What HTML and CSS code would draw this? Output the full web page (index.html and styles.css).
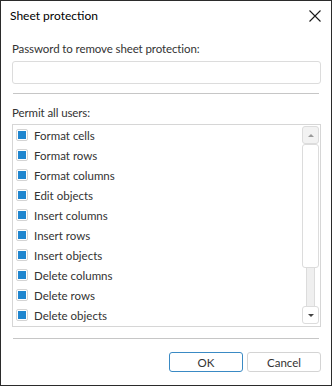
FILE: index.html
```html
<!DOCTYPE html>
<html lang="en">
<head>
    <meta charset="UTF-8">
    <meta name="viewport" content="width=device-width, initial-scale=1.0">
    <title>Sheet protection</title>
    <link rel="stylesheet" href="styles.css">
</head>
<body>
    <div class="dialog">
        <div class="title-bar">
            <span class="title">Sheet protection</span>
            <button class="close-button" aria-label="Close">
                <svg width="12" height="12" viewBox="0 0 12 12">
                    <path d="M0.5 0.5 L11.5 11.5 M11.5 0.5 L0.5 11.5" stroke="#1a1a1a" stroke-width="1.1" fill="none"/>
                </svg>
            </button>
        </div>

        <div class="content">
            <label class="field-label" for="password">Password to remove sheet protection:</label>
            <input class="password-input" id="password" type="password">

            <div class="separator"></div>

            <div class="field-label">Permit all users:</div>
            <div class="list-box">
                <ul class="permit-list">
                    <li><span class="check"></span>Format cells</li>
                    <li><span class="check"></span>Format rows</li>
                    <li><span class="check"></span>Format columns</li>
                    <li><span class="check"></span>Edit objects</li>
                    <li><span class="check"></span>Insert columns</li>
                    <li><span class="check"></span>Insert rows</li>
                    <li><span class="check"></span>Insert objects</li>
                    <li><span class="check"></span>Delete columns</li>
                    <li><span class="check"></span>Delete rows</li>
                    <li><span class="check"></span>Delete objects</li>
                </ul>
                <!-- fake scrollbar -->
                <div class="scrollbar">
                    <div class="scroll-btn up"><span class="arrow-up"></span></div>
                    <div class="scroll-thumb"></div>
                    <div class="scroll-track"></div>
                    <div class="scroll-btn down"><span class="arrow-down"></span></div>
                </div>
            </div>

            <div class="separator bottom"></div>

            <div class="buttons">
                <button class="btn primary">OK</button>
                <button class="btn">Cancel</button>
            </div>
        </div>
    </div>
</body>
</html>
```

FILE: styles.css
```css
body {
    margin: 0;
    padding: 0;
    font-family: Lato, "Noto Sans", sans-serif;
    font-size: 11.5px;
    color: #333;
}

.dialog {
    width: 332px;
    height: 386px;
    box-sizing: border-box;
    border: 1px solid #2b2b2b;
    background-color: #fff;
}

.title-bar {
    height: 29px;
    display: flex;
    justify-content: space-between;
    align-items: center;
    padding: 0 10px 0 9px;
}

.title {
    font-size: 12px;
    color: #000;
}

.close-button {
    border: none;
    background: none;
    padding: 0;
    width: 12px;
    height: 12px;
    display: flex;
}

.content {
    padding: 0 10px 0 11px;
}

.field-label {
    display: block;
    line-height: 16px;
    margin-top: 11px;
    letter-spacing: -0.1px;
}

.password-input {
    display: block;
    width: 100%;
    height: 23px;
    box-sizing: border-box;
    margin-top: 4px;
    border: 1px solid #dcdcdc;
    border-radius: 3px;
}

.separator {
    height: 1px;
    background-color: #c6c6c6;
    margin: 9px 2px 0 1px;
}

.separator.bottom {
    margin-top: 11px;
}

.list-box {
    display: flex;
    margin-top: 3px;
    height: 203px;
    box-sizing: border-box;
    border: 1px solid #d6d6d6;
}

.permit-list {
    flex: 1;
    list-style: none;
    margin: 0;
    padding: 0 0 0 3px;
}

.permit-list li {
    display: flex;
    align-items: center;
    height: 20px;
}

.check {
    width: 12px;
    height: 12px;
    box-sizing: border-box;
    border: 1px solid #d4d4d4;
    border-radius: 2px;
    margin-right: 6px;
    display: flex;
    align-items: center;
    justify-content: center;
}

.check::after {
    content: "";
    width: 8px;
    height: 8px;
    background-color: #1f86cf;
}

.scrollbar {
    width: 17px;
    margin: 1px 1px 2px 0;
    display: flex;
    flex-direction: column;
}

.scroll-btn {
    height: 18px;
    box-sizing: border-box;
    border: 1px solid #dcdcdc;
    border-radius: 3px;
    display: flex;
    align-items: center;
    justify-content: center;
}

.scroll-btn.up {
    background-color: #f2f2f2;
}

.arrow-up {
    border-left: 3px solid transparent;
    border-right: 3px solid transparent;
    border-bottom: 3px solid #9a9a9a;
}

.arrow-down {
    border-left: 3px solid transparent;
    border-right: 3px solid transparent;
    border-top: 3px solid #444;
}

.scroll-thumb {
    height: 124px;
    box-sizing: border-box;
    border: 1px solid #dcdcdc;
    border-radius: 3px;
}

.scroll-track {
    flex: 1;
    margin: 0 4px;
    background-color: #efefef;
    border-left: 1px solid #dcdcdc;
    border-right: 1px solid #dcdcdc;
}

.buttons {
    display: flex;
    justify-content: flex-end;
    gap: 4px;
    margin-top: 13px;
    padding-right: 0;
}

.btn {
    width: 74px;
    height: 20px;
    box-sizing: border-box;
    font-family: inherit;
    font-size: 11.5px;
    color: #333;
    background-color: #fff;
    border: 1px solid #d4d4d4;
    border-radius: 3px;
    padding: 0;
}

.btn.primary {
    border-color: #3a8ac4;
}
```
